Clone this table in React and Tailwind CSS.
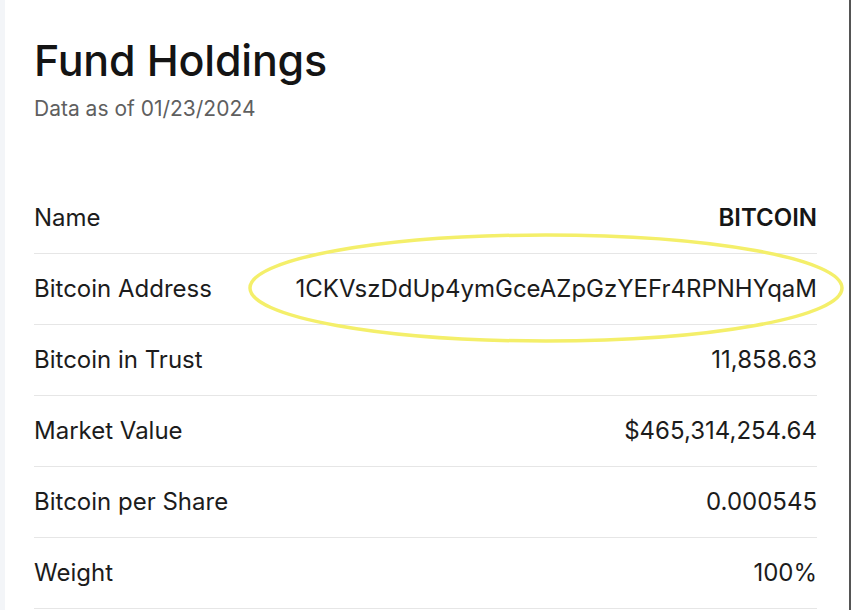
import React from 'react'

const rows = [
  { label: 'Name', value: 'BITCOIN', strong: true },
  { label: 'Bitcoin Address', value: '1CKVszDdUp4ymGceAZpGzYEFr4RPNHYqaM' },
  { label: 'Bitcoin in Trust', value: '11,858.63' },
  { label: 'Market Value', value: '$465,314,254.64' },
  { label: 'Bitcoin per Share', value: '0.000545' },
  { label: 'Weight', value: '100%' },
]

export default function App() {
  return (
    <div className="w-[851px] h-[610px] overflow-hidden bg-white flex font-['Inter',sans-serif] text-[#1a1a1a]">
      <div className="w-[5px] bg-[#f3f5f8]" />
      <div className="relative flex-1 pl-[29px] pr-[32px] pt-[34px]">
        <h1 className="text-[43px] leading-[52px] font-medium tracking-[-0.2px] text-[#141414]">Fund Holdings</h1>
        <p className="mt-[10px] text-[21px] leading-[26px] text-[#5f5f5f]">Data as of 01/23/2024</p>

        <div className="mt-[60px]">
          {rows.map((r, i) => (
            <div
              key={r.label}
              className={`flex items-center justify-between h-[71px] text-[24px] ${i > 0 ? 'border-t border-[#e6e6e6]' : ''}`}
            >
              <span className="text-[#1c1c1c]">{r.label}</span>
              <span className={r.strong ? 'font-semibold text-[#161616]' : 'text-[#1c1c1c]'}>{r.value}</span>
            </div>
          ))}
          <div className="border-t border-[#e6e6e6]" />
        </div>

        {/* highlight ring around the address */}
        <svg className="absolute left-[240px] top-[230px] pointer-events-none" width="604" height="118" viewBox="0 0 604 118">
          <ellipse cx="301" cy="58" rx="296" ry="53" fill="none" stroke="#f4ef6a" strokeWidth="3.5" />
        </svg>
      </div>
      <div className="w-[2px] bg-[#555555]" />
    </div>
  )
}
